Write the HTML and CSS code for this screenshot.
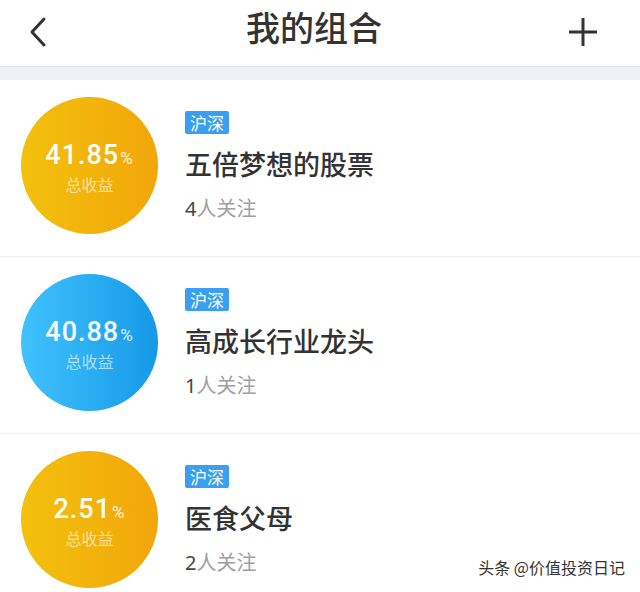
FILE: index.html
```html
<!DOCTYPE html>
<html lang="zh">
<head>
<meta charset="utf-8">
<link rel="stylesheet" href="styles.css">
</head>
<body>
<div class="page">
  <header class="topbar">
    <svg class="icon-back" width="20" height="32" viewBox="0 0 20 32"><path d="M16 3 L4 16 L16 29" fill="none" stroke="#333" stroke-width="3" stroke-linecap="round" stroke-linejoin="round"/></svg>
    <h1 class="title">我的组合</h1>
    <svg class="icon-plus" width="30" height="30" viewBox="0 0 30 30"><path d="M15 1 V29 M1 15 H29" fill="none" stroke="#333" stroke-width="3"/></svg>
  </header>
  <div class="band"></div>
  <ul class="list">
    <li class="row">
      <div class="circle yellow">
        <div class="num">41.85<span class="pct">%</span></div>
        <div class="label">总收益</div>
      </div>
      <div class="info">
        <span class="badge">沪深</span>
        <div class="name">五倍梦想的股票</div>
        <div class="follow"><b>4</b>人关注</div>
      </div>
    </li>
    <li class="row">
      <div class="circle blue">
        <div class="num">40.88<span class="pct">%</span></div>
        <div class="label">总收益</div>
      </div>
      <div class="info">
        <span class="badge">沪深</span>
        <div class="name">高成长行业龙头</div>
        <div class="follow"><b>1</b>人关注</div>
      </div>
    </li>
    <li class="row">
      <div class="circle yellow">
        <div class="num">2.51<span class="pct">%</span></div>
        <div class="label">总收益</div>
      </div>
      <div class="info">
        <span class="badge">沪深</span>
        <div class="name">医食父母</div>
        <div class="follow"><b>2</b>人关注</div>
      </div>
    </li>
  </ul>
  <div class="watermark">头条 @价值投资日记</div>
</div>
</body>
</html>
```

FILE: styles.css
```css
* { box-sizing: border-box; }
html, body { margin: 0; padding: 0; background: #fff; }
body { font-family: "Noto Sans CJK SC", "Noto Sans", sans-serif; color: #333; }
.page { position: relative; width: 640px; height: 592px; overflow: hidden; }
.topbar {
  height: 67px;
  display: flex;
  align-items: center;
  justify-content: space-between;
  padding: 0 42px 0 28px;
  border-bottom: 1px solid #dfe3ea;
}
.icon-back { display: block; margin-top: -2px; }
.icon-plus { display: block; margin-top: -2px; }
.title {
  margin: 0;
  font-size: 34px;
  font-weight: 500;
  color: #333;
  line-height: 1;
  margin-top: -12px;
  margin-left: 12px;
}
.band { height: 13px; background: #eef1f6; }
.list { list-style: none; margin: 0; padding: 0; }
.row {
  height: 177px;
  display: flex;
  align-items: center;
  padding-left: 21px;
  padding-bottom: 6px;
  border-bottom: 1px solid #eeeeee;
}
.circle {
  width: 137px;
  height: 137px;
  border-radius: 50%;
  display: flex;
  flex-direction: column;
  align-items: center;
  justify-content: center;
  color: #fff;
  flex-shrink: 0;
  padding-top: 4px;
}
.yellow { background: linear-gradient(90deg, #f2c10d, #f2a60a); }
.blue { background: linear-gradient(90deg, #40c2ff, #1699e6); }
.num {
  font-family: Roboto, "Liberation Sans", sans-serif;
  font-size: 27px;
  font-weight: 500;
  line-height: 28px;
  letter-spacing: 1px;
}
.pct { font-size: 17px; font-weight: 400; opacity: 0.85; margin-left: 1px; }
.label {
  font-size: 16px;
  line-height: 20px;
  margin-top: 2px;
  color: rgba(255, 255, 255, 0.62);
}
.info {
  margin-left: 27px;
  display: flex;
  flex-direction: column;
  align-items: flex-start;
}
.badge {
  display: block;
  height: 23px;
  line-height: 23px;
  padding: 0 5px;
  font-size: 17px;
  color: #fff;
  background: #3a9ff0;
  border-radius: 2px;
}
.name {
  margin-top: 14px;
  font-size: 27px;
  line-height: 32px;
  font-weight: 500;
  color: #333;
}
.follow {
  margin-top: 16px;
  font-size: 20px;
  line-height: 23px;
  color: #a0a0a0;
}
.follow b { font-weight: 400; color: #444; font-family: "Noto Sans", sans-serif; }
.watermark {
  position: absolute;
  right: 15px;
  bottom: 13px;
  font-size: 16px;
  color: #333;
  text-shadow: 0 0 2px #fff, 0 0 2px #fff;
}
```
